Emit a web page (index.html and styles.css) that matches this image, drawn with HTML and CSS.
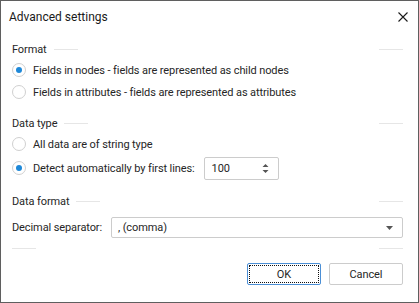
FILE: index.html
```html
<!DOCTYPE html>
<html lang="en">
<head>
  <meta charset="UTF-8">
  <title>Advanced settings</title>
  <link rel="stylesheet" href="styles.css">
</head>
<body>
  <div class="dialog">
    <div class="dialog-header">
      <span class="dialog-title">Advanced settings</span>
      <button class="close-btn" aria-label="Close">
        <svg width="10" height="10" viewBox="0 0 10 10">
          <path d="M0.5 0.5 L9.5 9.5 M9.5 0.5 L0.5 9.5" stroke="#1a1a1a" stroke-width="1.1" fill="none"/>
        </svg>
      </button>
    </div>

    <div class="dialog-body">
      <div class="group-title first">
        <span>Format</span>
        <i class="rule"></i>
        <i class="spacer"></i>
        <i class="rule"></i>
      </div>
      <label class="radio-row">
        <span class="radio checked"></span>
        Fields in nodes - fields are represented as child nodes
      </label>
      <label class="radio-row">
        <span class="radio"></span>
        Fields in attributes - fields are represented as attributes
      </label>

      <div class="group-title">
        <span>Data type</span>
        <i class="rule"></i>
        <i class="spacer"></i>
        <i class="rule"></i>
      </div>
      <label class="radio-row">
        <span class="radio"></span>
        All data are of string type
      </label>
      <div class="radio-row spin-row">
        <span class="radio checked"></span>
        <span class="spin-label">Detect automatically by first lines:</span>
        <div class="spinbox">
          <span>100</span>
          <svg width="7" height="11" viewBox="0 0 7 11">
            <path d="M3.5 1 L6.5 4 L0.5 4 Z M0.5 7 L6.5 7 L3.5 10 Z" fill="#555"/>
          </svg>
        </div>
      </div>

      <div class="group-title">
        <span>Data format</span>
        <i class="rule"></i>
        <i class="spacer"></i>
        <i class="rule"></i>
      </div>
      <div class="field-row">
        <span class="field-label">Decimal separator:</span>
        <div class="combo">
          <span>, (comma)</span>
          <svg width="7" height="4" viewBox="0 0 7 4">
            <path d="M0 0 L7 0 L3.5 4 Z" fill="#555"/>
          </svg>
        </div>
      </div>

      <div class="group-title separator">
        <i class="rule"></i>
        <i class="spacer"></i>
        <i class="rule"></i>
      </div>

      <div class="buttons">
        <button class="btn btn-primary"><span>OK</span></button>
        <button class="btn">Cancel</button>
      </div>
    </div>
  </div>
</body>
</html>
```

FILE: styles.css
```css
:root {
  --text-color: #262626;
  --title-color: #1a1a1a;
  --border-color: #cccccc;
  --rule-color: #e6e6e6;
  --accent-color: #1e88d8;
  --frame-color: #5f5f5f;
}

html, body {
  margin: 0;
  padding: 0;
  background: #ffffff;
}

body {
  font-family: Roboto, "Liberation Sans", Arial, sans-serif;
  font-size: 11px;
  letter-spacing: -0.1px;
  color: var(--text-color);
}

.dialog {
  box-sizing: border-box;
  width: 419px;
  height: 303px;
  border: 1px solid var(--frame-color);
  background: #ffffff;
}

.dialog-header {
  display: flex;
  align-items: center;
  justify-content: space-between;
  height: 31px;
  padding: 0 10px 0 8px;
}

.dialog-title {
  font-size: 12px;
  letter-spacing: 0;
  color: var(--title-color);
}

.close-btn {
  display: flex;
  padding: 0;
  border: none;
  background: none;
  cursor: pointer;
}

.dialog-body {
  padding: 0 15px 0 11px;
}

/* group heading with short rules */
.group-title {
  display: flex;
  align-items: center;
  height: 20px;
  margin-top: 10px;
}

.group-title.first {
  margin-top: 7px;
}

.group-title .rule {
  width: 24px;
  height: 1px;
  background: var(--rule-color);
}

.group-title span + .rule {
  margin-left: 7px;
}

.group-title .spacer {
  flex: 1;
}

.group-title.separator {
  margin-top: 6px;
  height: 9px;
}

.radio-row {
  display: flex;
  align-items: center;
  height: 22px;
}

.radio {
  box-sizing: border-box;
  width: 14px;
  height: 14px;
  margin-right: 7px;
  border: 1px solid #d0d0d0;
  border-radius: 50%;
  display: flex;
  align-items: center;
  justify-content: center;
  flex-shrink: 0;
}

.radio.checked::after {
  content: "";
  width: 6px;
  height: 6px;
  border-radius: 50%;
  background: var(--accent-color);
}

.spin-row {
  height: 26px;
}

.spin-label {
  margin-right: 9px;
  white-space: nowrap;
}

.spinbox {
  box-sizing: border-box;
  display: flex;
  align-items: center;
  justify-content: space-between;
  width: 75px;
  height: 23px;
  padding: 0 9px 0 7px;
  border: 1px solid var(--border-color);
  border-radius: 2px;
}

.field-row {
  display: flex;
  align-items: center;
  margin-top: 6px;
}

.field-label {
  width: 99px;
  white-space: nowrap;
}

.combo {
  box-sizing: border-box;
  flex: 1;
  display: flex;
  align-items: center;
  justify-content: space-between;
  height: 21px;
  padding: 0 9px 0 6px;
  border: 1px solid var(--border-color);
  border-radius: 2px;
}

.buttons {
  display: flex;
  justify-content: flex-end;
  gap: 8px;
  margin-top: 10px;
}

.btn {
  box-sizing: border-box;
  width: 74px;
  height: 22px;
  padding: 0;
  font-family: inherit;
  font-size: 11px;
  letter-spacing: inherit;
  color: var(--text-color);
  background: #ffffff;
  border: 1px solid var(--border-color);
  border-radius: 2px;
}

.btn-primary {
  border-color: #4b8fd6;
  padding: 1px;
}

.btn-primary span {
  box-sizing: border-box;
  display: flex;
  align-items: center;
  justify-content: center;
  height: 100%;
  border: 1px dotted #111111;
}
```
